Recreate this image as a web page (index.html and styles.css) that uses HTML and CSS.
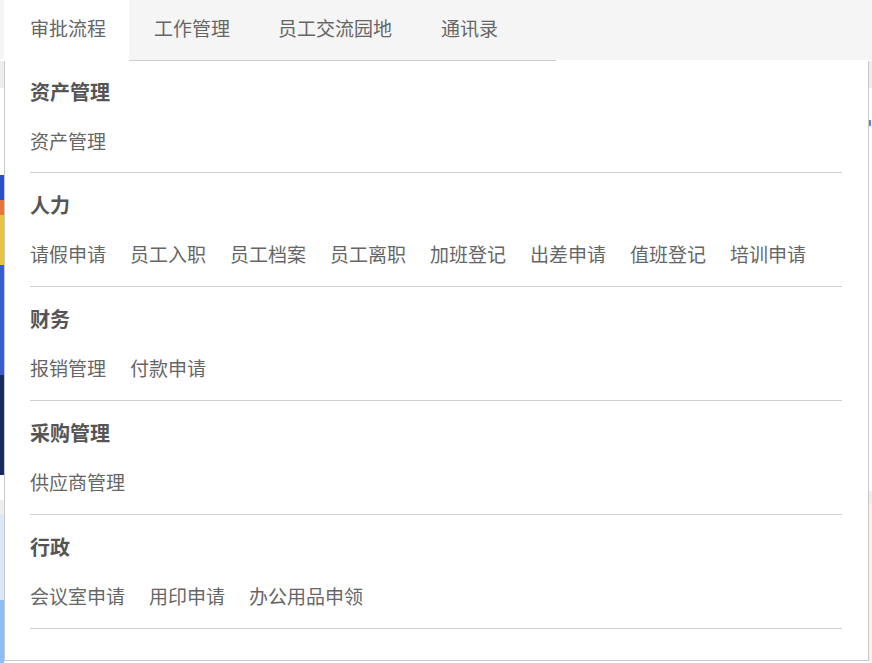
FILE: index.html
```html
<!DOCTYPE html>
<html lang="zh">
<head>
<meta charset="utf-8">
<title>审批流程</title>
<link rel="stylesheet" href="styles.css">
</head>
<body>
<div class="topbar">
  <ul class="tablist">
    <li class="tab active">审批流程</li>
    <li class="tab">工作管理</li>
    <li class="tab">员工交流园地</li>
    <li class="tab">通讯录</li>
  </ul>
</div>
<div class="main">
  <div class="strip strip-left">
    <div class="s-gray"></div>
    <div class="s-white1"></div>
    <div class="s-blue1"></div>
    <div class="s-orange"></div>
    <div class="s-yellow"></div>
    <div class="s-blue2"></div>
    <div class="s-navy"></div>
    <div class="s-white2"></div>
    <div class="s-gray2"></div>
    <div class="s-lblue"></div>
    <div class="s-mblue"></div>
  </div>
  <div class="panel">
    <section class="group">
      <h3 class="group-title">资产管理</h3>
      <div class="links"><a class="link">资产管理</a></div>
    </section>
    <section class="group">
      <h3 class="group-title">人力</h3>
      <div class="links">
        <a class="link">请假申请</a><a class="link">员工入职</a><a class="link">员工档案</a><a class="link">员工离职</a><a class="link">加班登记</a><a class="link">出差申请</a><a class="link">值班登记</a><a class="link">培训申请</a>
      </div>
    </section>
    <section class="group">
      <h3 class="group-title">财务</h3>
      <div class="links"><a class="link">报销管理</a><a class="link">付款申请</a></div>
    </section>
    <section class="group">
      <h3 class="group-title">采购管理</h3>
      <div class="links"><a class="link">供应商管理</a></div>
    </section>
    <section class="group">
      <h3 class="group-title">行政</h3>
      <div class="links"><a class="link">会议室申请</a><a class="link">用印申请</a><a class="link">办公用品申领</a></div>
    </section>
  </div>
  <div class="strip strip-right">
    <div class="r-gray"></div>
    <div class="r-white1"></div>
    <div class="r-dot"></div>
    <div class="r-white2"></div>
    <div class="r-gray2"></div>
    <div class="r-beige"></div>
  </div>
</div>
</body>
</html>
```
FILE: styles.css
```css
* { box-sizing: border-box; }
html, body {
  margin: 0;
  padding: 0;
  width: 872px;
  height: 663px;
  overflow: hidden;
  background: #fff;
  font-family: "Microsoft YaHei", "Noto Sans CJK SC", "Noto Sans", sans-serif;
}
.topbar {
  height: 61px;
  background: linear-gradient(#f5f5f5 0, #f5f5f5 60px, #fff 60px);
}
.tablist {
  list-style: none;
  margin: 0 0 0 4px;
  padding: 0;
  width: 552px;
  height: 61px;
  display: flex;
  border-bottom: 1px solid #cfcfcf;
}
.tab {
  padding: 0 23px 0 25px;
  height: 60px;
  line-height: 55px;
  font-size: 19px;
  color: #666;
  white-space: nowrap;
}
.tab:first-child { padding-left: 26px; }
.tab:nth-child(3) { padding-right: 24px; }
.tab.active {
  background: #fff;
  height: 61px;
}

.main {
  display: flex;
  height: 602px;
}
.strip { display: flex; flex-direction: column; }
.strip-left { width: 4px; }
.strip-right { flex: 1; }

.s-gray { height: 27px; background: #eee; }
.s-white1 { height: 87px; background: #fff; }
.s-blue1 { height: 25px; background: #2f4fc6; }
.s-orange { height: 15px; background: #e8743a; }
.s-yellow { height: 50px; background: #e7c540; }
.s-blue2 { height: 110px; background: #3a5ccc; }
.s-navy { height: 100px; background: #1b2a5e; }
.s-white2 { height: 25px; background: #fff; }
.s-gray2 { height: 15px; background: #eee; }
.s-lblue { height: 85px; background: #dce7f8; }
.s-mblue { flex: 1; background: #8fbcf5; }

.r-gray { height: 27px; background: #eee; }
.r-white1 { height: 32px; background: #fff; }
.r-dot { height: 6px; background: linear-gradient(90deg, #4a8fe0 0 2px, #fff 2px); }
.r-white2 { height: 365px; background: #fff; }
.r-gray2 { height: 12px; background: #eee; }
.r-beige { flex: 1; background: #fdf1e0; }

.panel {
  width: 865px;
  height: 600px;
  background: #fff;
  border: 1px solid #c8c8c8;
  border-top: none;
  padding: 0 26px 0 25px;
}
.group {
  padding: 17px 0 17px;
  border-bottom: 1px solid #d0d0d0;
}
.group:first-child { padding: 16px 0 16px; }
.group-title {
  margin: 0;
  height: 30px;
  line-height: 29px;
  font-size: 20px;
  font-weight: bold;
  color: #555;
}
.links {
  margin-top: 19px;
  height: 30px;
  line-height: 29px;
  display: flex;
  white-space: nowrap;
}
.link {
  font-size: 19px;
  color: #666;
  margin-right: 24px;
  text-decoration: none;
}
```
